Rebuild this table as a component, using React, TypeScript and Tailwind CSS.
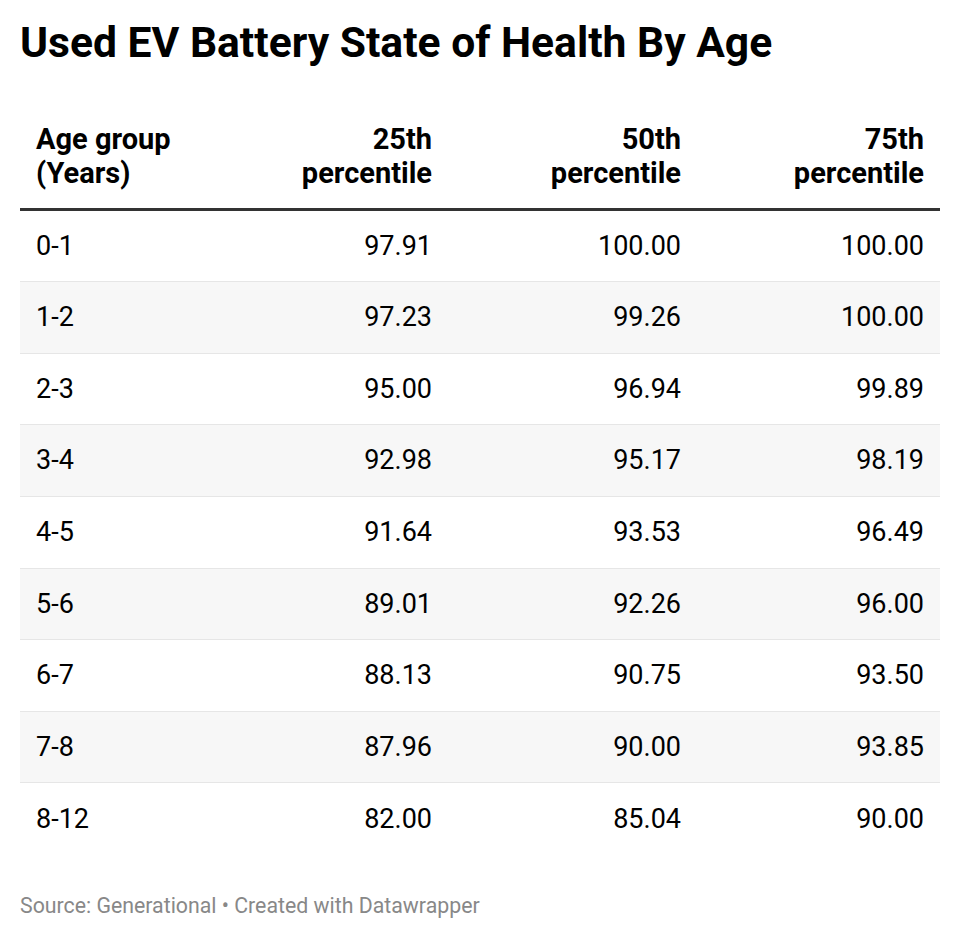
const rows: [string, string, string, string][] = [
  ["0-1", "97.91", "100.00", "100.00"],
  ["1-2", "97.23", "99.26", "100.00"],
  ["2-3", "95.00", "96.94", "99.89"],
  ["3-4", "92.98", "95.17", "98.19"],
  ["4-5", "91.64", "93.53", "96.49"],
  ["5-6", "89.01", "92.26", "96.00"],
  ["6-7", "88.13", "90.75", "93.50"],
  ["7-8", "87.96", "90.00", "93.85"],
  ["8-12", "82.00", "85.04", "90.00"],
];

const App = () => {
  return (
    <div className="w-[960px] h-[937px] bg-white px-5 font-['Roboto',sans-serif] text-black overflow-hidden">
      {/* Title */}
      <h1 className="pt-[21px] text-[42.6px] leading-none font-bold">
        Used EV Battery State of Health By Age
      </h1>

      {/* Table */}
      <div className="mt-[58px] w-[920px]">
        <div className="grid grid-cols-[179px_249px_249px_243px] border-b-[3px] border-[#333] pb-[18px] text-[29px] leading-[34px] font-bold">
          <div className="px-4">
            Age group
            <br />
            (Years)
          </div>
          <div className="px-4 text-right">
            25th
            <br />
            percentile
          </div>
          <div className="px-4 text-right">
            50th
            <br />
            percentile
          </div>
          <div className="px-4 text-right">
            75th
            <br />
            percentile
          </div>
        </div>

        {rows.map((r, i) => (
          <div
            key={r[0]}
            className={`grid grid-cols-[179px_249px_249px_243px] items-center h-[71.6px] text-[27px] ${
              i % 2 === 1 ? "bg-[#f7f7f7]" : "bg-white"
            } ${i < rows.length - 1 ? "border-b border-[#e6e6e6]" : ""}`}
          >
            <div className="px-4">{r[0]}</div>
            <div className="px-4 text-right">{r[1]}</div>
            <div className="px-4 text-right">{r[2]}</div>
            <div className="px-4 text-right">{r[3]}</div>
          </div>
        ))}
      </div>

      {/* Footer */}
      <p className="mt-[35px] text-[21.3px] text-[#888888]">
        Source: Generational • Created with Datawrapper
      </p>
    </div>
  );
};

export default App;
